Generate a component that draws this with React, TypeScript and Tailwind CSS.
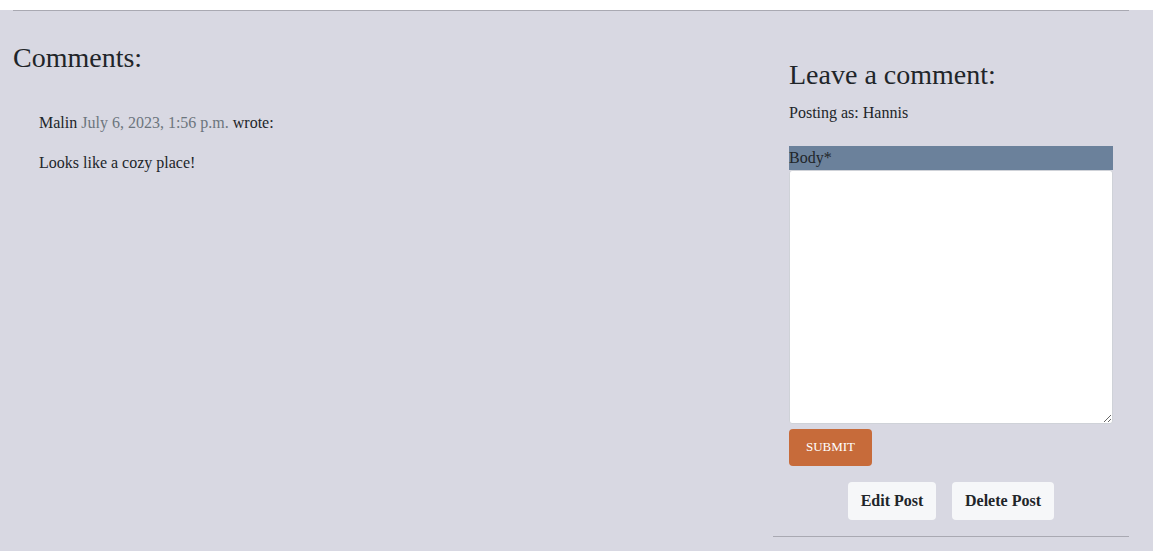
import React from 'react';

const serif = { fontFamily: '"Liberation Serif", "Times New Roman", serif' };

export default function App() {
  return (
    <div className="min-h-screen bg-[#d8d8e2] text-[#212529]" style={serif}>
      <div className="ml-[13px] w-[1116px]">
        <hr className="mt-[10px] border-0 border-t border-[#a9a9b2]" />

        <div className="flex">
          {/* comments column */}
          <div className="w-[760px]">
            <h3 className="mt-[30px] text-[28px] leading-[1.2]">Comments:</h3>
            <div className="ml-[26px] mt-[36px] text-base leading-6">
              <p className="mb-4">
                Malin <span className="text-[#6c757d]">July 6, 2023, 1:56 p.m.</span> wrote:
              </p>
              <p>Looks like a cozy place!</p>
            </div>
          </div>

          {/* form column */}
          <div className="w-[356px]">
            <div className="px-4">
              <h3 className="mt-[47px] mb-[9px] text-[28px] leading-[1.2]">Leave a comment:</h3>
              <p className="text-base leading-6">Posting as: Hannis</p>
              <form className="mt-[21px]">
                <label className="block bg-[#6b819b] text-base leading-6">Body*</label>
                <textarea className="block h-[254px] w-full resize-y rounded-[3px] border border-[#cfd2d8] bg-white" />
                <button
                  type="button"
                  className="mt-[5px] h-[37px] w-[83px] rounded-[4px] bg-[#c76b3a] text-[13px] text-white"
                >
                  SUBMIT
                </button>
              </form>
              <div className="mt-4 flex justify-center gap-4">
                <button type="button" className="h-[38px] w-[88px] rounded-[4px] bg-[#f6f7f9] text-base font-bold">
                  Edit Post
                </button>
                <button type="button" className="h-[38px] w-[102px] rounded-[4px] bg-[#f6f7f9] text-base font-bold">
                  Delete Post
                </button>
              </div>
            </div>
            <hr className="mt-4 border-0 border-t border-[#a9a9b2]" />
          </div>
        </div>
      </div>
    </div>
  );
}
